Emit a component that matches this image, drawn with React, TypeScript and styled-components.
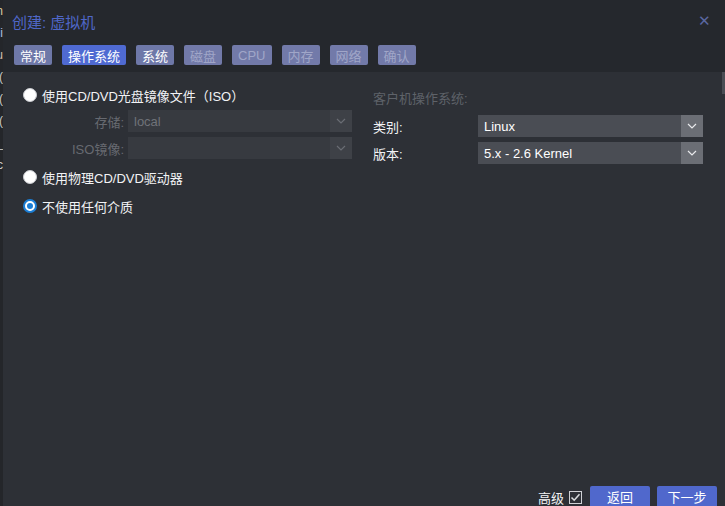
import * as React from 'react';
import styled, { createGlobalStyle } from 'styled-components';

const GlobalStyle = createGlobalStyle`
  html, body {
    margin: 0;
    padding: 0;
    background: #202226;
  }
  body {
    font-family: "Liberation Sans", "Noto Sans CJK SC", sans-serif;
    font-size: 13px;
  }
`;

const Page = styled.div`
  display: flex;
  width: 725px;
  height: 506px;
  overflow: hidden;
`;

const BgStrip = styled.div`
  width: 3px;
  flex-shrink: 0;
  overflow: hidden;
  background: #24262a;
  display: flex;
  flex-direction: column;
  align-items: flex-end;
  padding-top: 4px;
`;

const BgLine = styled.span<{ $color: string }>`
  display: block;
  height: 22px;
  line-height: 14px;
  font-size: 12px;
  color: ${(p) => p.$color};
  white-space: nowrap;
`;

const Dialog = styled.div`
  flex: 1;
  display: flex;
  flex-direction: column;
  background: #2d3036;
`;

const Header = styled.div`
  height: 40px;
  padding: 0 14px 0 9px;
  display: flex;
  align-items: center;
  justify-content: space-between;
  background: #25282d;
`;

const Title = styled.div`
  color: #4f67c8;
  font-size: 15px;
  padding-top: 2px;
`;

const Close = styled.div`
  color: #5a67a0;
  font-size: 15px;
  line-height: 1;
  display: flex;
`;

const TabBar = styled.div`
  display: flex;
  gap: 10px;
  padding: 5px 11px 7px;
  background: #25282d;
`;

const Tab = styled.div<{ $state: 'done' | 'active' | 'disabled' }>`
  height: 20px;
  padding: 0 6px;
  border-radius: 2px;
  display: flex;
  align-items: center;
  justify-content: center;
  font-size: 13px;
  background: ${(p) =>
    p.$state === 'active' ? '#4f6ad2' : p.$state === 'done' ? '#6e78a8' : '#727aa9'};
  color: ${(p) => (p.$state === 'disabled' ? '#a0a6c8' : '#ffffff')};
`;

const Body = styled.div`
  flex: 1;
  display: grid;
  grid-template-columns: 350px 1fr;
  padding: 12px 22px 0 20px;
  position: relative;
`;

const Column = styled.div`
  display: flex;
  flex-direction: column;
`;

const RadioRow = styled.div<{ $gap: number }>`
  display: flex;
  align-items: center;
  gap: 5px;
  height: 22px;
  margin-top: ${(p) => p.$gap}px;
  color: #f2f3f5;
`;

const RadioDot = styled.span<{ $checked?: boolean }>`
  width: 14px;
  height: 14px;
  box-sizing: border-box;
  border-radius: 50%;
  background: #ffffff;
  border: ${(p) => (p.$checked ? '2px solid #1b7ed6' : '1px solid #c9cbd0')};
  display: flex;
  align-items: center;
  justify-content: center;
  &::after {
    content: '';
    display: ${(p) => (p.$checked ? 'block' : 'none')};
    width: 6px;
    height: 6px;
    border-radius: 50%;
    background: #1b7ed6;
  }
`;

const FieldRow = styled.div<{ $gap: number; $labelWidth: number }>`
  display: grid;
  grid-template-columns: ${(p) => p.$labelWidth}px 1fr;
  align-items: center;
  margin-top: ${(p) => p.$gap}px;
`;

const FieldLabel = styled.div<{ $align: 'left' | 'right'; $dim?: boolean }>`
  text-align: ${(p) => p.$align};
  padding-right: ${(p) => (p.$align === 'right' ? '4px' : '0')};
  color: ${(p) => (p.$dim ? '#676a71' : '#f2f3f5')};
`;

const SelectBox = styled.div<{ $disabled?: boolean; $width: number }>`
  width: ${(p) => p.$width}px;
  height: 22px;
  display: flex;
  background: ${(p) => (p.$disabled ? '#373a40' : '#4a4d54')};
  color: ${(p) => (p.$disabled ? '#6f7279' : '#ffffff')};
`;

const SelectValue = styled.div`
  flex: 1;
  display: flex;
  align-items: center;
  padding-left: 6px;
  font-size: 13px;
`;

const SelectTrigger = styled.div<{ $disabled?: boolean }>`
  width: 22px;
  display: flex;
  align-items: center;
  justify-content: center;
  background: ${(p) => (p.$disabled ? '#3e4147' : '#6b6e75')};
`;

const Heading = styled.div`
  height: 22px;
  display: flex;
  align-items: center;
  color: #5e6269;
  margin-top: 2px;
`;

const Scrollbar = styled.div`
  position: absolute;
  right: 0;
  top: 0;
  width: 3px;
  height: 22px;
  background: #4a4d54;
`;

const Footer = styled.div`
  height: 20px;
  display: flex;
  justify-content: flex-end;
  align-items: flex-start;
  padding-right: 8px;
  gap: 7px;
`;

const AdvLabel = styled.label`
  display: flex;
  align-items: center;
  gap: 5px;
  height: 22px;
  margin-right: 1px;
  color: #f2f3f5;
`;

const Button = styled.div`
  width: 60px;
  height: 24px;
  border-radius: 2px;
  background: #5068cc;
  color: #ffffff;
  display: flex;
  align-items: center;
  justify-content: center;
  padding-bottom: 4px;
  box-sizing: border-box;
`;

const Chevron = ({ color }: { color: string }) => (
  <svg width="10" height="6" viewBox="0 0 10 6">
    <path d="M1 1 L5 5 L9 1" fill="none" stroke={color} strokeWidth="1.2" />
  </svg>
);

const CheckIcon = () => (
  <svg width="13" height="13" viewBox="0 0 13 13">
    <rect x="0.5" y="0.5" width="12" height="12" fill="#2d3036" stroke="#cfd1d5" />
    <path d="M2.5 6.5 L5.2 9.2 L10.5 3.2" fill="none" stroke="#d8dadd" strokeWidth="1.6" />
  </svg>
);

type SelectProps = { value?: string; disabled?: boolean; width: number };

const Select = ({ value, disabled, width }: SelectProps) => (
  <SelectBox $disabled={disabled} $width={width}>
    <SelectValue>{value}</SelectValue>
    <SelectTrigger $disabled={disabled}>
      <Chevron color={disabled ? '#6a6d74' : '#e8e9ec'} />
    </SelectTrigger>
  </SelectBox>
);

const tabs: { name: string; state: 'done' | 'active' | 'disabled' }[] = [
  { name: '常规', state: 'done' },
  { name: '操作系统', state: 'active' },
  { name: '系统', state: 'done' },
  { name: '磁盘', state: 'disabled' },
  { name: 'CPU', state: 'disabled' },
  { name: '内存', state: 'disabled' },
  { name: '网络', state: 'disabled' },
  { name: '确认', state: 'disabled' },
];

// fragments of the page behind the dialog, only their right edge shows
const bgLines = [
  { t: 'n', c: '#d8c9a0' },
  { t: 'i', c: '#a9c0e0' },
  { t: 'u', c: '#d8c0b0' },
  { t: '(', c: '#c8c8c8' },
  { t: '(', c: '#c8c8c8' },
  { t: '(', c: '#c8c8c8' },
  { t: '_', c: '#c8c8c8' },
  { t: 'c', c: '#c8c8c8' },
];

export default function App() {
  return (
    <>
      <GlobalStyle />
      <Page>
        <BgStrip>
          {bgLines.map((l, i) => (
            <BgLine key={i} $color={l.c}>
              {l.t}
            </BgLine>
          ))}
        </BgStrip>
        <Dialog>
          <Header>
            <Title>创建: 虚拟机</Title>
            <Close>✕</Close>
          </Header>
          <TabBar>
            {tabs.map((t) => (
              <Tab key={t.name} $state={t.state}>
                {t.name}
              </Tab>
            ))}
          </TabBar>
          <Body>
            <Column>
              <RadioRow $gap={0}>
                <RadioDot />
                使用CD/DVD光盘镜像文件（ISO）
              </RadioRow>
              <FieldRow $gap={4} $labelWidth={105}>
                <FieldLabel $align="right" $dim>
                  存储:
                </FieldLabel>
                <Select value="local" disabled width={224} />
              </FieldRow>
              <FieldRow $gap={5} $labelWidth={105}>
                <FieldLabel $align="right" $dim>
                  ISO镜像:
                </FieldLabel>
                <Select disabled width={224} />
              </FieldRow>
              <RadioRow $gap={7}>
                <RadioDot />
                使用物理CD/DVD驱动器
              </RadioRow>
              <RadioRow $gap={7}>
                <RadioDot $checked />
                不使用任何介质
              </RadioRow>
            </Column>
            <Column>
              <Heading>客户机操作系统:</Heading>
              <FieldRow $gap={7} $labelWidth={105}>
                <FieldLabel $align="left">类别:</FieldLabel>
                <Select value="Linux" width={225} />
              </FieldRow>
              <FieldRow $gap={5} $labelWidth={105}>
                <FieldLabel $align="left">版本:</FieldLabel>
                <Select value="5.x - 2.6 Kernel" width={225} />
              </FieldRow>
            </Column>
            <Scrollbar />
          </Body>
          <Footer>
            <AdvLabel>
              高级
              <CheckIcon />
            </AdvLabel>
            <Button>返回</Button>
            <Button>下一步</Button>
          </Footer>
        </Dialog>
      </Page>
    </>
  );
}
